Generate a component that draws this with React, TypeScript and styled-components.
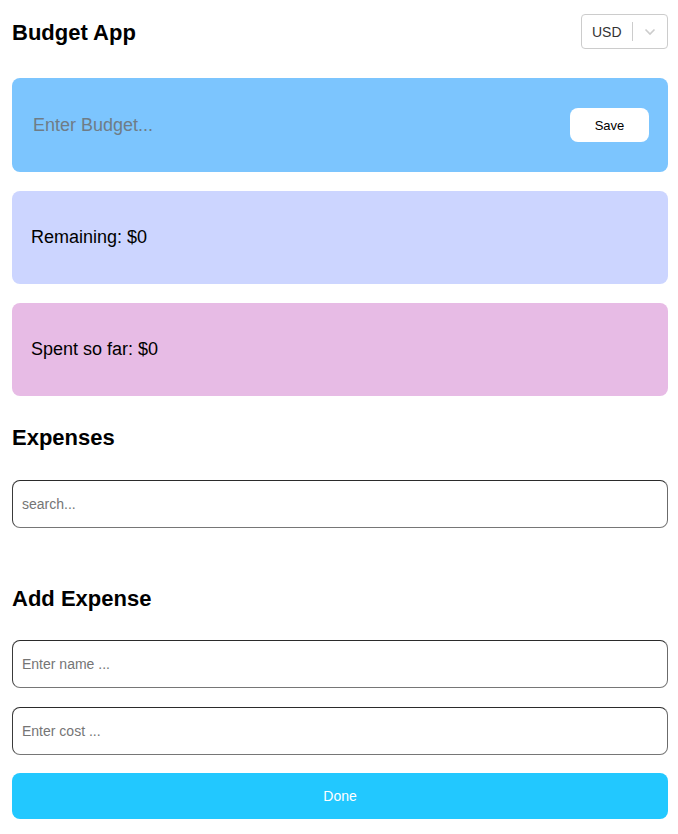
import React from "react";
import styled, { createGlobalStyle } from "styled-components";

const Global = createGlobalStyle`
  html, body { margin: 0; padding: 0; background: #fff; }
  body { font-family: "Liberation Sans", Arial, sans-serif; color: #000; }
  * { box-sizing: border-box; }
`;

const Page = styled.div`
  padding: 14px 10px 14px 12px;
  display: flex;
  flex-direction: column;
`;

const Header = styled.div`
  display: flex;
  align-items: center;
  justify-content: space-between;
  height: 35px;
`;

const Title = styled.h1`
  margin: 2px 0 0 0;
  font-size: 22px;
  font-weight: 700;
  line-height: 26px;
`;

const Select = styled.div`
  width: 87px;
  height: 35px;
  border: 1px solid #cccccc;
  border-radius: 4px;
  display: flex;
  align-items: center;
  font-size: 14px;
  color: #333;
`;

const SelectValue = styled.span`
  flex: 1;
  padding-left: 10px;
  padding-top: 1px;
`;

const Sep = styled.span`
  width: 1px;
  height: 19px;
  background: #cccccc;
`;

const Chevron = styled.span`
  width: 34px;
  display: flex;
  justify-content: center;
  align-items: center;
`;

const Card = styled.div<{ $bg: string; $first?: boolean }>`
  background: ${(p) => p.$bg};
  border-radius: 8px;
  height: ${(p) => (p.$first ? "94px" : "93px")};
  margin-top: ${(p) => (p.$first ? "29px" : "19px")};
  padding: 0 19px 0 19px;
  display: flex;
  align-items: center;
  justify-content: space-between;
  font-size: 18px;
`;

const BudgetInput = styled.input`
  border: none;
  outline: none;
  background: transparent;
  font-family: inherit;
  font-size: 18px;
  padding: 0 2px;
  flex: 1;
  &::placeholder { color: #6f7c86; }
`;

const SaveButton = styled.button`
  width: 79px;
  height: 34px;
  border: none;
  border-radius: 8px;
  background: #fff;
  font-family: inherit;
  font-size: 13px;
  color: #000;
`;

const Heading = styled.h2<{ $top: number }>`
  margin: ${(p) => p.$top}px 0 0 0;
  font-size: 22px;
  font-weight: 700;
  line-height: 26px;
`;

const Field = styled.input<{ $top: number }>`
  margin-top: ${(p) => p.$top}px;
  height: 48px;
  width: 100%;
  border-radius: 8px;
  border: 1px solid;
  border-color: #2b2b2b #6b6b6b #767676 #3a3a3a;
  padding: 0 9px;
  font-family: inherit;
  font-size: 14px;
  outline: none;
  &::placeholder { color: #757575; }
`;

const DoneButton = styled.button`
  margin-top: 18px;
  height: 46px;
  width: 100%;
  border: none;
  border-radius: 8px;
  background: #22c8ff;
  color: #fff;
  font-family: inherit;
  font-size: 14px;
`;

export default function App() {
  return (
    <>
      <Global />
      <Page>
        <Header>
          <Title>Budget App</Title>
          <Select>
            <SelectValue>USD</SelectValue>
            <Sep />
            <Chevron>
              <svg width="12" height="8" viewBox="0 0 12 8">
                <path d="M1.5 1.5 L6 6 L10.5 1.5" fill="none" stroke="#cccccc" strokeWidth="1.6" />
              </svg>
            </Chevron>
          </Select>
        </Header>
        <Card $bg="#7cc5fe" $first>
          <BudgetInput placeholder="Enter Budget..." />
          <SaveButton>Save</SaveButton>
        </Card>
        <Card $bg="#ccd5ff">Remaining: $0</Card>
        <Card $bg="#e7bbe5">Spent so far: $0</Card>
        <Heading $top={29}>Expenses</Heading>
        <Field $top={29} placeholder="search..." />
        <Heading $top={58}>Add Expense</Heading>
        <Field $top={28} placeholder="Enter name ..." />
        <Field $top={19} placeholder="Enter cost ..." />
        <DoneButton>Done</DoneButton>
      </Page>
    </>
  );
}
